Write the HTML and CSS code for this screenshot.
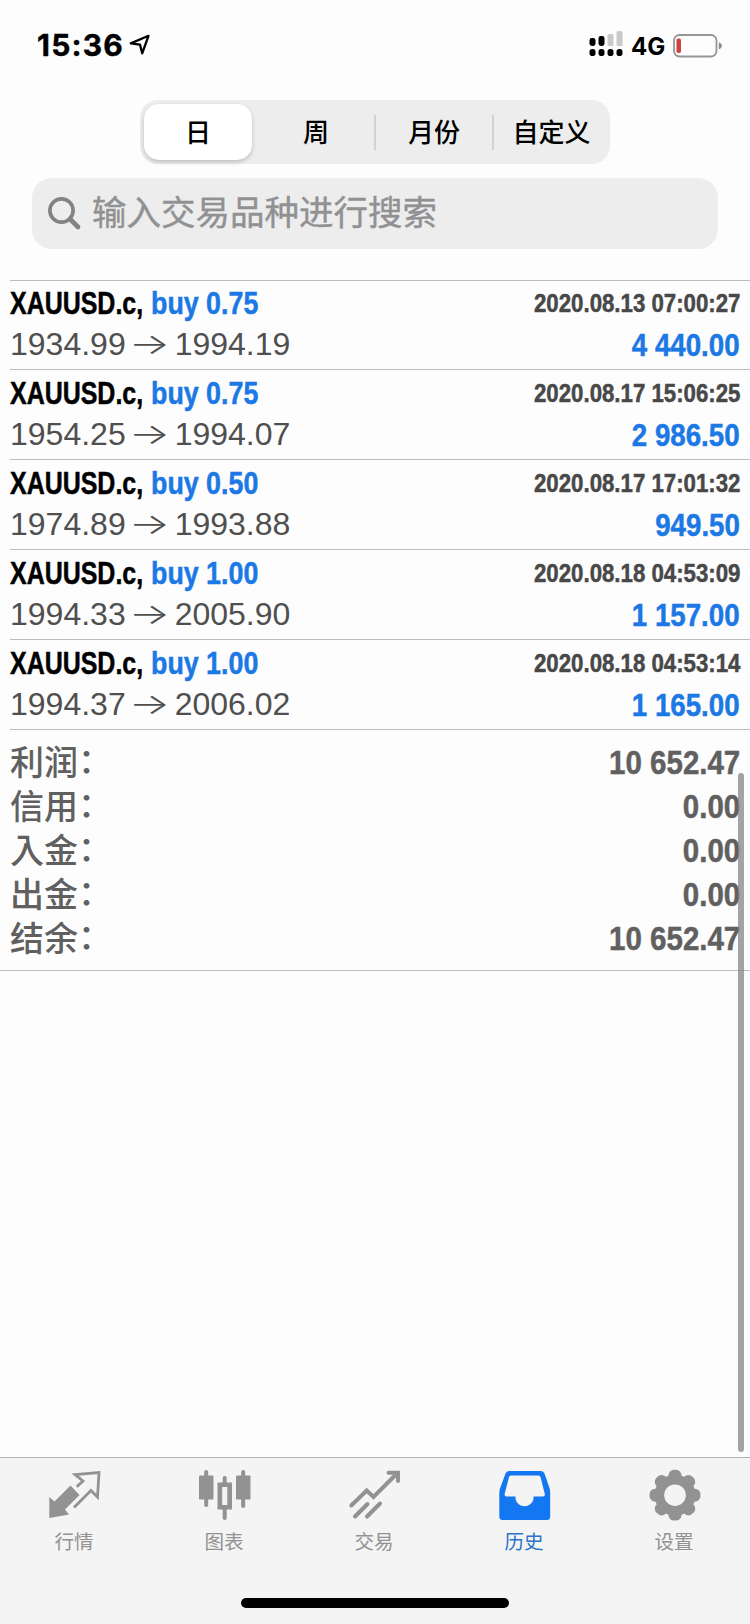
FILE: index.html
```html
<!DOCTYPE html>
<html lang="zh-CN">
<head>
<meta charset="utf-8">
<title>历史</title>
<link rel="stylesheet" href="styles.css">
</head>
<body>
<div class="app">
  <header class="status">
    <span class="clock">15:36</span>
    <svg class="location" width="22" height="22" viewBox="0 0 22 22"><path d="M19.5 1.8 L1.8 9.4 L11 10.6 L13.2 19.3 Z" fill="none" stroke="#000" stroke-width="2.3" stroke-linejoin="round"/></svg>
    <svg class="signal" width="34" height="26" viewBox="0 0 34 26"><g fill="#c9c9cb"><rect x="18.5" y="3" width="6" height="12" rx="1.5"/><rect x="27.5" y="0" width="6" height="15" rx="1.5"/></g><rect x="0.5" y="7" width="6" height="8" rx="2.4"/><rect x="9.5" y="5" width="6" height="10" rx="2.4"/><rect x="0.5" y="18" width="6" height="7" rx="2.8"/><rect x="9.5" y="18" width="6" height="7" rx="2.8"/><rect x="18.5" y="18" width="6" height="7" rx="2.8"/><rect x="27.5" y="18" width="6" height="7" rx="2.8"/></svg>
    <span class="network">4G</span>
    <svg class="battery" width="50" height="24" viewBox="0 0 50 24"><rect x="1" y="1" width="42.5" height="21.5" rx="5.5" fill="none" stroke="#969696" stroke-width="1.8"/><rect x="3.5" y="4.5" width="4.5" height="14.5" rx="1.8" fill="#cf413d"/><path d="M45.8 8 Q49 9.5 49 11.8 Q49 14 45.8 15.5 Z" fill="#8c8c8c"/></svg>
  </header>
  <nav class="segments">
    <span class="segment selected">日</span>
    <span class="segment">周</span>
    <span class="segment divided">月份</span>
    <span class="segment divided">自定义</span>
  </nav>
  <div class="search">
    <svg width="34" height="34" viewBox="0 0 34 34" fill="none" stroke="#838385"><circle cx="13.5" cy="13.5" r="11.6" stroke-width="3.7"/><path d="M22 22 L30 30" stroke-width="4.6" stroke-linecap="round"/></svg>
    <span>输入交易品种进行搜索</span>
  </div>
  <main class="history">
    <section class="deals">
      <article class="deal">
        <div class="line"><span class="symbol">XAUUSD.c,</span><span class="side">buy 0.75</span><time>2020.08.13 07:00:27</time></div>
        <div class="line"><span class="price">1934.99</span><span class="arrow">→</span><span class="price">1994.19</span><span class="profit">4 440.00</span></div>
      </article>
      <article class="deal">
        <div class="line"><span class="symbol">XAUUSD.c,</span><span class="side">buy 0.75</span><time>2020.08.17 15:06:25</time></div>
        <div class="line"><span class="price">1954.25</span><span class="arrow">→</span><span class="price">1994.07</span><span class="profit">2 986.50</span></div>
      </article>
      <article class="deal">
        <div class="line"><span class="symbol">XAUUSD.c,</span><span class="side">buy 0.50</span><time>2020.08.17 17:01:32</time></div>
        <div class="line"><span class="price">1974.89</span><span class="arrow">→</span><span class="price">1993.88</span><span class="profit">949.50</span></div>
      </article>
      <article class="deal">
        <div class="line"><span class="symbol">XAUUSD.c,</span><span class="side">buy 1.00</span><time>2020.08.18 04:53:09</time></div>
        <div class="line"><span class="price">1994.33</span><span class="arrow">→</span><span class="price">2005.90</span><span class="profit">1 157.00</span></div>
      </article>
      <article class="deal">
        <div class="line"><span class="symbol">XAUUSD.c,</span><span class="side">buy 1.00</span><time>2020.08.18 04:53:14</time></div>
        <div class="line"><span class="price">1994.37</span><span class="arrow">→</span><span class="price">2006.02</span><span class="profit">1 165.00</span></div>
      </article>
    </section>
    <dl class="summary">
      <div class="total"><dt lang="zh-TW">利润：</dt><dd>10 652.47</dd></div>
      <div class="total"><dt lang="zh-TW">信用：</dt><dd>0.00</dd></div>
      <div class="total"><dt lang="zh-TW">入金：</dt><dd>0.00</dd></div>
      <div class="total"><dt lang="zh-TW">出金：</dt><dd>0.00</dd></div>
      <div class="total"><dt lang="zh-TW">结余：</dt><dd>10 652.47</dd></div>
    </dl>
    <i class="scrollbar"></i>
  </main>
  <footer class="tabbar">
    <div class="tabs">
      <div class="tab">
        <svg width="54" height="54" viewBox="0 0 54 54"><path d="M1.3 29 L6.5 33.5 L22.5 17.5 L31.5 27 L17 41.5 L21 46.5 L1.3 50 Z" fill="#929292"/><path d="M28.7 18.8 L35 13 L27 6.5 L51 4.5 L49.5 29 L43 22.5 L26 39.5" fill="none" stroke="#929292" stroke-width="2.8"/></svg>
        <span>行情</span>
      </div>
      <div class="tab">
        <svg width="54" height="54" viewBox="0 0 54 54" fill="#929292"><rect x="1" y="7.5" width="14.5" height="24" rx="1"/><rect x="6.2" y="2" width="4" height="37" rx="2"/><rect x="38" y="7.5" width="14.5" height="24" rx="1"/><rect x="43.2" y="2" width="4" height="38" rx="2"/><path d="M19.5 14.5 H34 V41.5 H19.5 Z M24.2 19 V37 H29.3 V19 Z" fill-rule="evenodd"/><rect x="24.7" y="8" width="4" height="9" rx="2"/><rect x="24.7" y="39" width="4" height="13" rx="2"/></svg>
        <span>图表</span>
      </div>
      <div class="tab">
        <svg width="54" height="54" viewBox="0 0 54 54" fill="none" stroke="#929292" stroke-width="4" stroke-linecap="round"><path d="M3.3 37.5 L18.7 22.5 L25.5 29 L49 5.5"/><path d="M7 48.5 L19.5 36 M19 48.5 L32 35.5"/><path d="M40.5 4.7 H50 V13" stroke-width="3.9"/><path d="M42 3 H52 V13 Z" fill="#929292" stroke="none"/></svg>
        <span>交易</span>
      </div>
      <div class="tab active">
        <svg width="54" height="54" viewBox="0 0 54 54"><path d="M11 3 H43 Q45.5 3 46.5 5.5 L51.5 20 Q52.2 22 52.2 25 V48.5 Q52.2 52 49 52 H4.7 Q1.3 52 1.3 48.5 V25 Q1.3 22 2.2 20 L7.5 5.5 Q8.5 3 11 3 Z M12.7 7.5 Q11.5 7.5 11 9 L6.6 26 Q6.3 28.5 8.5 28.5 H17.5 V31 A9.2 9 0 0 0 35.5 31 V28.5 H45 Q47.3 28.5 46.8 26 L42.5 9 Q42 7.5 40.5 7.5 Z" fill="#1477f2" fill-rule="evenodd"/></svg>
        <span>历史</span>
      </div>
      <div class="tab">
        <svg width="54" height="54" viewBox="0 0 54 54"><g fill="#929292"><circle cx="27" cy="27.2" r="20.5"/><rect x="20.5" y="1.8" width="13" height="50.8" rx="5.5"/><rect x="20.5" y="1.8" width="13" height="50.8" rx="5.5" transform="rotate(45 27 27.2)"/><rect x="20.5" y="1.8" width="13" height="50.8" rx="5.5" transform="rotate(90 27 27.2)"/><rect x="20.5" y="1.8" width="13" height="50.8" rx="5.5" transform="rotate(135 27 27.2)"/></g><circle cx="27" cy="27.2" r="10.8" fill="#f4f4f4"/></svg>
        <span>设置</span>
      </div>
    </div>
    <i class="home"></i>
  </footer>
</div>
</body>
</html>
```
FILE: styles.css
```css
* { box-sizing: border-box; }

body {
  margin: 0;
  background: #fdfdfd;
  font-family: "Liberation Sans", "Noto Sans CJK SC", sans-serif;
}

svg { display: block; flex: none; }

.app {
  display: flex;
  flex-direction: column;
  width: 750px;
  height: 1624px;
  overflow: hidden;
}

/* Status bar */
.status {
  display: flex;
  align-items: flex-start;
  height: 100px;
  padding: 30px 27px 0 37px;
  font-family: Inter, "Liberation Sans", sans-serif;
}
.clock {
  width: 88px;
  font-size: 30px;
  line-height: 31px;
  font-weight: 700;
  letter-spacing: 1.2px;
  white-space: nowrap;
  -webkit-text-stroke: 0.4px;
}
.location { margin: 4px 0 0 4px; }
.signal { margin: 1px 8px 0 auto; }
.network {
  width: 34px;
  font-size: 24px;
  line-height: 33px;
  font-weight: 650;
}
.battery { margin: 4px 0 0 8px; }

/* Period selector */
.segments {
  display: flex;
  width: 470px;
  height: 64px;
  margin-left: 140px;
  padding: 4px 0 4px 4px;
  border-radius: 18px;
  background: #ededed;
}
.segment {
  display: flex;
  flex: 0 0 118px;
  align-items: center;
  justify-content: center;
  position: relative;
  padding-bottom: 2px;
  font-family: "Noto Sans CJK SC", sans-serif;
  font-size: 26px;
  font-weight: 500;
  line-height: 54px;
}
.segment:last-child { flex-basis: 117px; }
.segment.selected {
  flex-basis: 108px;
  margin-right: 5px;
  border-radius: 15px;
  background: #fff;
  box-shadow: 0 2px 4px #0003;
}
.segment.divided::before {
  content: "";
  position: absolute;
  left: -1px;
  top: 11px;
  width: 2px;
  height: 35px;
  background: #d2d2d4;
}

/* Search */
.search {
  display: flex;
  gap: 10px;
  width: 686px;
  height: 71px;
  margin: 14px 0 0 32px;
  padding: 0 16px;
  align-items: center;
  border-radius: 20px;
  background: #ededed;
  color: #919193;
  font-family: "Noto Sans CJK SC", sans-serif;
  font-size: 34.5px;
  line-height: 64px;
  -webkit-text-stroke: 0.4px;
}
.search span { padding-bottom: 7px; }

/* Deals */
.history {
  position: relative;
  flex: 1;
  padding-top: 31px;
}
.deals {
  margin-left: 10px;
  border-bottom: 1px solid #bdbdbd;
}
.deal {
  height: 90px;
  border-top: 1px solid #bdbdbd;
  padding: 4px 10px 0 0;
}
.deal:first-child {
  height: 89px;
  padding-top: 3px;
}
.line {
  display: flex;
  height: 41px;
  align-items: baseline;
  font-size: 32px;
  line-height: 38px;
  white-space: nowrap;
}
.symbol, .side, time, .profit, dd {
  font-weight: 700;
  -webkit-text-stroke: 0.5px;
}
.symbol {
  width: 141px;
  transform: scaleX(.78);
  transform-origin: left;
}
.side {
  color: #1b78e4;
  transform: scaleX(.838);
  transform-origin: left;
}
time {
  margin-left: auto;
  color: #484848;
  font-size: 26px;
  transform: translateY(-2px) scaleX(.855);
  transform-origin: right;
}
.price { color: #4f4f4f; }
.arrow {
  width: 49px;
  text-align: center;
  color: #4f4f4f;
  font-family: Inter, sans-serif;
  font-size: 29px;
  font-weight: 300;
  transform: translate(-1px, -1px) scaleX(1.5);
}
.profit {
  margin-left: auto;
  color: #1b78e4;
  transform: translateY(1px) scaleX(.865);
  transform-origin: right;
}

/* Totals */
.summary {
  height: 241px;
  margin: 0;
  padding: 10px 10px 0;
  border-bottom: 1px solid #bdbdbd;
  color: #606060;
}
.total {
  display: flex;
  height: 44px;
  justify-content: space-between;
  align-items: center;
}
dt {
  padding-bottom: 2px;
  font-family: "Noto Sans CJK TC", "Noto Sans CJK SC", sans-serif;
  font-size: 34px;
  font-weight: 500;
  font-feature-settings: "halt";
  line-height: 42px;
}
dd {
  margin: 0;
  font-size: 34px;
  line-height: 44px;
  transform: scaleX(.867);
  transform-origin: right;
}
.scrollbar {
  position: absolute;
  right: 6px;
  top: 524px;
  width: 6px;
  height: 679px;
  border-radius: 3px;
  background: #808080b8;
}

/* Tab bar */
.tabbar {
  display: flex;
  flex-direction: column;
  align-items: center;
  height: 167px;
  border-top: 1px solid #b3b3b3;
  background: #f4f4f4;
}
.tabs {
  display: grid;
  grid-template-columns: repeat(5, 150px);
  height: 140px;
}
.tab {
  display: flex;
  flex-direction: column;
  align-items: center;
  padding-top: 10px;
  color: #929292;
  font-family: "Noto Sans CJK SC", sans-serif;
  font-size: 19.6px;
  line-height: 28px;
}
.tab span { margin: 5px 2px 0 0; }
.tab.active { color: #2b74c8; }
.home {
  width: 268px;
  height: 10px;
  border-radius: 5px;
  background: #000;
}
```
